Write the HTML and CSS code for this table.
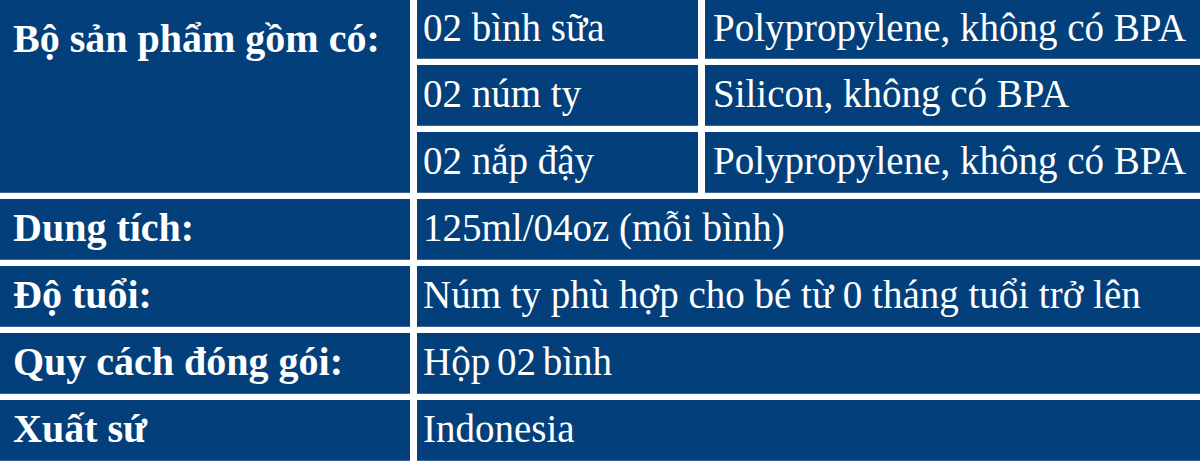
FILE: index.html
```html
<!DOCTYPE html>
<html lang="vi">
<head>
<meta charset="utf-8">
<title>Thông tin sản phẩm</title>
<link rel="stylesheet" href="styles.css">
</head>
<body>
<div class="spec">
  <div class="cell label label-top span3">Bộ sản phẩm gồm có:</div>
  <div class="cell item">02 bình sữa</div>
  <div class="cell detail">Polypropylene, không có BPA</div>
  <div class="cell item">02 núm ty</div>
  <div class="cell detail">Silicon, không có BPA</div>
  <div class="cell item">02 nắp đậy</div>
  <div class="cell detail">Polypropylene, không có BPA</div>

  <div class="cell label">Dung tích:</div>
  <div class="cell value">125ml/04oz (mỗi bình)</div>

  <div class="cell label">Độ tuổi:</div>
  <div class="cell value">Núm ty phù hợp cho bé từ 0 tháng tuổi trở lên</div>

  <div class="cell label">Quy cách đóng gói:</div>
  <div class="cell value tight">Hộp 02 bình</div>

  <div class="cell label">Xuất sứ</div>
  <div class="cell value">Indonesia</div>
</div>
</body>
</html>
```

FILE: styles.css
```css
html, body {
  margin: 0;
  padding: 0;
  background: #ffffff;
}

.spec {
  display: grid;
  grid-template-columns: 410px 281px 1fr;
  grid-template-rows: 59px 61px 61px 61px 61px 61px 61px;
  column-gap: 7px;
  row-gap: 6px;
  width: 1200px;
  font-family: "Liberation Serif", "Times New Roman", serif;
  color: #ffffff;
}

.cell {
  background: #023f7b;
  box-shadow: inset 0 -1px 0 #3a6898;
  display: flex;
  align-items: center;
  box-sizing: border-box;
  padding-bottom: 5px;
  font-size: 39px;
  white-space: nowrap;
  overflow: hidden;
}

.label {
  font-weight: bold;
  padding-left: 13px;
  font-size: 40px;
}

.label-top {
  align-items: flex-start;
  padding-top: 15px;
}

.span3 {
  grid-row: span 3;
}

.item {
  padding-left: 6px;
}

.detail {
  padding-left: 8px;
}

.value {
  grid-column: span 2;
  padding-left: 6px;
}

.tight {
  word-spacing: -3px;
}
```
